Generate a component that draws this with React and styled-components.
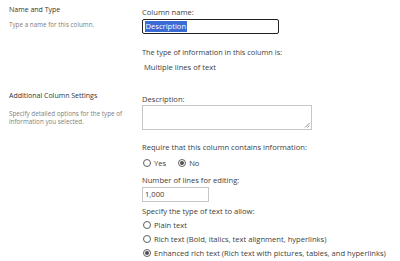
import React from "react";
import styled, { createGlobalStyle } from "styled-components";

const Global = createGlobalStyle`
  html, body { margin: 0; padding: 0; background: #fff; }
  body { font-family: "Open Sans", "Noto Sans", sans-serif; color: #333; }
`;

const Page = styled.div`
  width: 400px;
  height: 261px;
  overflow: hidden;
  background: #fff;
`;

const Section = styled.section`
  display: grid;
  grid-template-columns: 142px 1fr;
  padding-top: ${(p) => p.$top}px;
  height: ${(p) => p.$h}px;
  box-sizing: border-box;
`;

const Side = styled.div`
  padding-left: 9px;
`;

const SideTitle = styled.div`
  font-size: 7px;
  line-height: 9px;
  color: #333;
`;

const SideText = styled.div`
  font-size: 6.3px;
  line-height: 8px;
  color: #808080;
  margin-top: ${(p) => p.$mt}px;
  width: 120px;
`;

const Main = styled.div`
  display: flex;
  flex-direction: column;
  align-items: flex-start;
  font-size: 7.6px;
  line-height: 11px;
  color: #404040;
`;

const Label = styled.div`
  margin-top: ${(p) => p.$mt || 0}px;
`;

const NameInput = styled.div`
  box-sizing: border-box;
  width: 137px;
  height: 15px;
  border: 1.5px solid #222;
  border-radius: 2px;
  padding: 1px 2px;
  display: flex;
  align-items: center;
  margin-top: 1px;
`;

const Selected = styled.span`
  background: #3a6ad4;
  color: #fff;
  line-height: 11px;
  padding: 0 0.5px;
`;

const Info = styled.div`
  margin-top: ${(p) => p.$mt}px;
  padding-left: ${(p) => p.$pl || 0}px;
  font-size: ${(p) => p.$fs || 7.6}px;
`;

const TextArea = styled.div`
  position: relative;
  box-sizing: border-box;
  width: 170px;
  height: 25px;
  border: 1px solid #c6c6c6;
`;

const Grip = styled.svg`
  position: absolute;
  right: 1px;
  bottom: 1px;
`;

const SmallInput = styled.div`
  box-sizing: border-box;
  width: 67px;
  height: 15px;
  border: 1px solid #c6c6c6;
  padding: 0 2px;
  display: flex;
  align-items: center;
  margin-top: ${(p) => p.$mt || 0}px;
`;

const RadioRow = styled.div`
  display: flex;
  gap: ${(p) => p.$gap || 0}px;
  margin-top: ${(p) => p.$mt || 0}px;
  padding-left: 1px;
`;

const RadioItem = styled.label`
  display: flex;
  align-items: center;
  gap: 3px;
  height: 14px;
`;

const Circle = styled.span`
  box-sizing: border-box;
  width: 8px;
  height: 8px;
  border-radius: 50%;
  border: 1px solid #606060;
  display: flex;
  align-items: center;
  justify-content: center;
  &::after {
    content: "";
    display: ${(p) => (p.$on ? "block" : "none")};
    width: 4px;
    height: 4px;
    border-radius: 50%;
    background: #505050;
  }
`;

const Radio = ({ on, children }) => (
  <RadioItem>
    <Circle $on={on} />
    <span>{children}</span>
  </RadioItem>
);

export default function App() {
  return (
    <Page>
      <Global />
      <Section $top={5} $h={88}>
        <Side>
          <SideTitle>Name and Type</SideTitle>
          <SideText $mt={7}>Type a name for this column.</SideText>
        </Side>
        <Main>
          <Label $mt={2}>Column name:</Label>
          <NameInput>
            <Selected>Description</Selected>
          </NameInput>
          <Info $mt={13} $fs={7.35}>The type of information in this column is:</Info>
          <Info $mt={4} $pl={2}>Multiple lines of text</Info>
        </Main>
      </Section>
      <Section $top={3} $h={173}>
        <Side>
          <SideTitle>Additional Column Settings</SideTitle>
          <SideText $mt={10}>
            Specify detailed options for the type of information you selected.
          </SideText>
        </Side>
        <Main>
          <Label $mt={3}>Description:</Label>
          <TextArea>
            <Grip width="6" height="6" viewBox="0 0 6 6">
              <path d="M5.5 1 L1 5.5 M5.5 3.5 L3.5 5.5" stroke="#777" strokeWidth="0.8" />
            </Grip>
          </TextArea>
          <Label $mt={12}>Require that this column contains information:</Label>
          <RadioRow $gap={12} $mt={3}>
            <Radio>Yes</Radio>
            <Radio on>No</Radio>
          </RadioRow>
          <Label $mt={5}>Number of lines for editing:</Label>
          <SmallInput $mt={1}>1,000</SmallInput>
          <Label $mt={4}>Specify the type of text to allow:</Label>
          <RadioRow $mt={1}>
            <Radio>Plain text</Radio>
          </RadioRow>
          <RadioRow>
            <Radio>Rich text (Bold, italics, text alignment, hyperlinks)</Radio>
          </RadioRow>
          <RadioRow>
            <Radio on>
              Enhanced rich text (Rich text with pictures, tables, and hyperlinks)
            </Radio>
          </RadioRow>
        </Main>
      </Section>
    </Page>
  );
}
